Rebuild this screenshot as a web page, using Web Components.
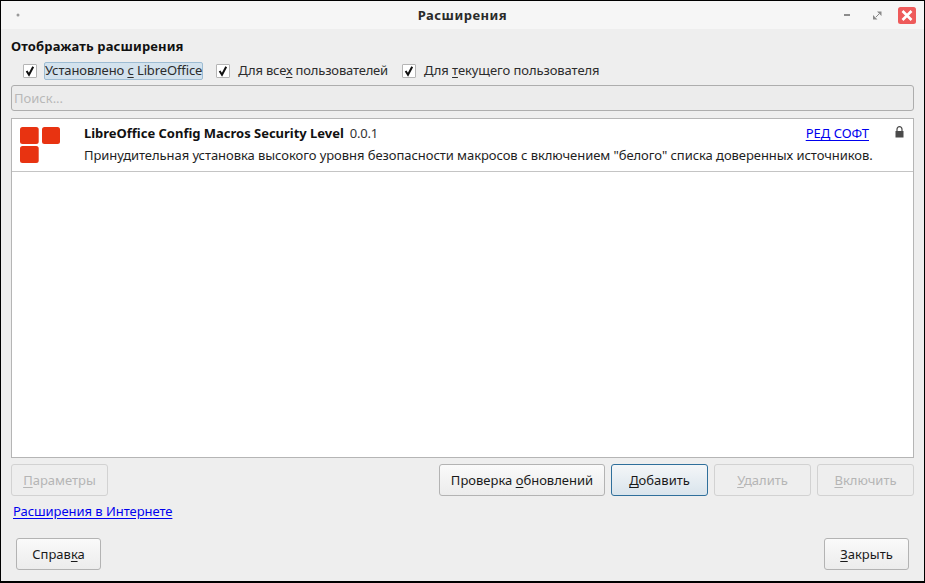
<!DOCTYPE html>
<html lang="ru">
<head>
<meta charset="utf-8">
<title>Расширения</title>
<style>
  html, body { margin: 0; padding: 0; height: 100%; }
  body { font: 13px "Noto Sans", sans-serif; color: #1a1a1a; }
</style>
</head>
<body>
<ext-window>
  <win-titlebar slot="title">Расширения</win-titlebar>
  <h-label>Отображать расширения</h-label>
  <div slot="checks">
    <ext-check focused style="--ls:-0.12px">Установлено <u>с</u> LibreOffice</ext-check>
    <ext-check style="--ls:-0.18px">Для все<u>х</u> пользователей</ext-check>
    <ext-check style="--ls:-0.08px">Для <u>т</u>екущего пользователя</ext-check>
  </div>
  <search-box slot="search">Поиск...</search-box>
  <ext-list slot="list">
    <ext-row name="LibreOffice Config Macros Security Level" version="0.0.1" publisher="РЕД СОФТ">Принудительная установка высокого уровня безопасности макросов с включением "белого" списка доверенных источников.</ext-row>
  </ext-list>
  <ext-button slot="actions" disabled style="width:97px"><u>П</u>араметры</ext-button>
  <span slot="actions" style="flex:1"></span>
  <ext-button slot="actions" style="width:166px">Проверка <u>о</u>бновлений</ext-button>
  <ext-button slot="actions" primary style="width:97px"><u>Д</u>обавить</ext-button>
  <ext-button slot="actions" disabled style="width:97px"><u>У</u>далить</ext-button>
  <ext-button slot="actions" disabled style="width:97px"><u>В</u>ключить</ext-button>
  <ext-link slot="link">Расширения в Интернете</ext-link>
  <ext-button slot="footer" style="width:85px">Справ<u>к</u>а</ext-button>
  <span slot="footer" style="flex:1"></span>
  <ext-button slot="footer" style="width:85px"><u>З</u>акрыть</ext-button>
</ext-window>

<script>
class ExtWindow extends HTMLElement {
    constructor() {
        super();
        this.attachShadow({ mode: 'open' });
        this.shadowRoot.innerHTML = `
            <style>
                :host {
                    display: flex;
                    flex-direction: column;
                    box-sizing: border-box;
                    width: 925px;
                    height: 583px;
                    overflow: hidden;
                    background: #eeeeee;
                    border: solid #000;
                    border-width: 1px 1px 2px 1px;
                }
                .body {
                    display: flex;
                    flex-direction: column;
                    flex: 1;
                    padding: 7px 10px 0 10px;
                }
                .checks ::slotted(div) {
                    display: flex;
                    height: 22px;
                    margin: 4px 0 0 12px;
                    align-items: center;
                }
                .search { margin-top: 3px; }
                .list { margin-top: 7px; }
                .actions { display: flex; gap: 6px; margin-top: 6px; }
                .link { margin: 6px 0 0 2px; height: 21px; }
                .footer { display: flex; margin: 15px 5px 0 5px; }
            </style>
            <slot name="title"></slot>
            <div class="body">
                <slot></slot>
                <div class="checks"><slot name="checks"></slot></div>
                <div class="search"><slot name="search"></slot></div>
                <div class="list"><slot name="list"></slot></div>
                <div class="actions"><slot name="actions"></slot></div>
                <div class="link"><slot name="link"></slot></div>
                <div class="footer"><slot name="footer"></slot></div>
            </div>
        `;
    }
}

class WinTitlebar extends HTMLElement {
    constructor() {
        super();
        this.attachShadow({ mode: 'open' });
        this.shadowRoot.innerHTML = `
            <style>
                :host {
                    display: flex;
                    align-items: center;
                    justify-content: center;
                    position: relative;
                    height: 28px;
                    background: #f6f6f6;
                    font-weight: bold;
                    font-size: 13px;
                    letter-spacing: 0.5px;
                    color: #2a2a2a;
                }
                svg { position: absolute; }
                .dot { left: 15px; top: 12px; }
                .min { left: 842px; top: 12px; }
                .max { left: 872px; top: 10px; }
                .close { left: 897px; top: 6px; }
            </style>
            <svg class="dot" width="4" height="4"><circle cx="2" cy="2" r="1.5" fill="#9a9a9a"/></svg>
            <slot></slot>
            <svg class="min" width="12" height="4"><rect x="1" y="1" width="6" height="2" fill="#8c8c8c"/></svg>
            <svg class="max" width="9" height="9" viewBox="0 0 9 9"><path d="M4 0.500h4.500V5zM4.500 8.500H0V4z" fill="#8a8a8a"/><path d="M3 6l3-3" stroke="#8a8a8a" stroke-width="1"/></svg>
            <svg class="close" width="18" height="17" viewBox="0 0 18 17"><rect width="18" height="17" rx="2.500" fill="#ee5a5a"/><path d="M4.500 4l9 9M13.500 4l-9 9" stroke="#fff" stroke-width="2.600"/></svg>
        `;
    }
}

class HLabel extends HTMLElement {
    constructor() {
        super();
        this.attachShadow({ mode: 'open' });
        this.shadowRoot.innerHTML = `
            <style>
                :host { display: block; height: 20px; line-height: 20px; font-weight: bold; letter-spacing: 0.14px; color: #111; }
            </style>
            <slot></slot>
        `;
    }
}

class ExtCheck extends HTMLElement {
    constructor() {
        super();
        this.attachShadow({ mode: 'open' });
        this.shadowRoot.innerHTML = `
            <style>
                :host { display: inline-flex; align-items: center; margin-right: 13px; }
                .box {
                    box-sizing: border-box;
                    width: 14px;
                    height: 14px;
                    background: #fff;
                    border: 1px solid #b5b5b5;
                    border-radius: 1px;
                    display: flex;
                    margin-right: 7px;
                }
                .text {
                    height: 16px;
                    line-height: 15px;
                    border: 1px solid transparent;
                    border-radius: 2px;
                    letter-spacing: var(--ls, 0);
                    color: #2c2c2c;
                }
                :host([focused]) .text {
                    background: #d3e2ed;
                    border-color: #9dbcd3;
                }
                ::slotted(u) { text-underline-offset: 2px; }
            </style>
            <span class="box"><svg width="12" height="12" viewBox="0 0 12 12"><path d="M2.600 6L5 9.800 9.200 1.800" fill="none" stroke="#111" stroke-width="2"/></svg></span>
            <span class="text"><slot></slot></span>
        `;
    }
}

class SearchBox extends HTMLElement {
    constructor() {
        super();
        this.attachShadow({ mode: 'open' });
        this.shadowRoot.innerHTML = `
            <style>
                :host {
                    display: block;
                    box-sizing: border-box;
                    height: 26px;
                    line-height: 25px;
                    padding-left: 2px;
                    background: #ececec;
                    border: 1px solid #adadad;
                    border-radius: 3px;
                    color: #b8b8b8;
                }
            </style>
            <slot></slot>
        `;
    }
}

class ExtList extends HTMLElement {
    constructor() {
        super();
        this.attachShadow({ mode: 'open' });
        this.shadowRoot.innerHTML = `
            <style>
                :host {
                    display: block;
                    box-sizing: border-box;
                    height: 340px;
                    background: #fff;
                    border: 1px solid #b5b5b5;
                }
            </style>
            <slot></slot>
        `;
    }
}

class ExtRow extends HTMLElement {
    constructor() {
        super();
        this.attachShadow({ mode: 'open' });
        this.shadowRoot.innerHTML = `
            <style>
                :host {
                    display: flex;
                    box-sizing: border-box;
                    height: 53px;
                    border-bottom: 1px solid #c4c4c4;
                    color: #1e1e1e;
                }
                .logo { flex: none; width: 72px; padding: 7px 0 0 8px; box-sizing: border-box; }
                .main { flex: 1; min-width: 0; padding-top: 4px; }
                .top { display: flex; height: 20px; line-height: 20px; }
                .name { font-weight: bold; letter-spacing: -0.02px; color: #111; }
                .version { margin-left: 6px; letter-spacing: -0.2px; color: #333; }
                .pub { margin-left: auto; color: #0000ee; text-decoration: underline; text-underline-offset: 2px; }
                .lock { flex: none; width: 44px; padding: 3px 0 0 26px; box-sizing: border-box; }
                .desc { height: 20px; line-height: 20px; margin-top: 2px; letter-spacing: -0.06px; white-space: nowrap; }
            </style>
            <div class="logo">
                <svg width="41" height="38" viewBox="0 0 41 38" style="display:block">
                    <rect x="0" y="1" width="18.700" height="17" rx="2.500" fill="#e83311"/>
                    <rect x="22" y="1" width="18" height="17" rx="2.500" fill="#e83311"/>
                    <rect x="0" y="20" width="18.700" height="17" rx="2.500" fill="#e83311"/>
                </svg>
            </div>
            <div class="main">
                <div class="top">
                    <span class="name"></span><span class="version"></span>
                    <span class="pub"></span>
                    <span class="lock">
                        <svg width="9" height="12" viewBox="0 0 9 12" style="display:block">
                            <rect x="0.500" y="5" width="8" height="6.500" fill="#4a4a4a"/>
                            <path d="M2 5V3.200a2.500 2.500 0 0 1 5 0V5" fill="none" stroke="#4a4a4a" stroke-width="1.200"/>
                        </svg>
                    </span>
                </div>
                <div class="desc"><slot></slot></div>
            </div>
        `;
    }

    connectedCallback() {
        this.shadowRoot.querySelector('.name').textContent = this.getAttribute('name');
        this.shadowRoot.querySelector('.version').textContent = this.getAttribute('version');
        this.shadowRoot.querySelector('.pub').textContent = this.getAttribute('publisher');
    }
}

class ExtButton extends HTMLElement {
    constructor() {
        super();
        this.attachShadow({ mode: 'open' });
        this.shadowRoot.innerHTML = `
            <style>
                :host {
                    display: flex;
                    align-items: center;
                    justify-content: center;
                    flex: none;
                    box-sizing: border-box;
                    height: 32px;
                    background: linear-gradient(#fafafa, #ececec);
                    border: 1px solid #b3b3b3;
                    border-radius: 3px;
                    color: #1a1a1a;
                }
                :host([primary]) {
                    background: linear-gradient(#f4f6f8, #d9e4ec);
                    border-color: #2f6f9b;
                }
                :host([disabled]) {
                    background: #eeeeee;
                    border-color: #d2d2d2;
                    color: #b5b5b5;
                }
                ::slotted(u) { text-underline-offset: 2px; }
            </style>
            <span><slot></slot></span>
        `;
    }
}

class ExtLink extends HTMLElement {
    constructor() {
        super();
        this.attachShadow({ mode: 'open' });
        this.shadowRoot.innerHTML = `
            <style>
                :host {
                    display: inline-block;
                    line-height: 18px;
                    color: #0000ee;
                    letter-spacing: -0.05px;
                    text-decoration: underline;
                    text-underline-offset: 2px;
                }
            </style>
            <slot></slot>
        `;
    }
}

window.customElements.define('ext-window', ExtWindow);
window.customElements.define('win-titlebar', WinTitlebar);
window.customElements.define('h-label', HLabel);
window.customElements.define('ext-check', ExtCheck);
window.customElements.define('search-box', SearchBox);
window.customElements.define('ext-list', ExtList);
window.customElements.define('ext-row', ExtRow);
window.customElements.define('ext-button', ExtButton);
window.customElements.define('ext-link', ExtLink);
</script>
</body>
</html>
